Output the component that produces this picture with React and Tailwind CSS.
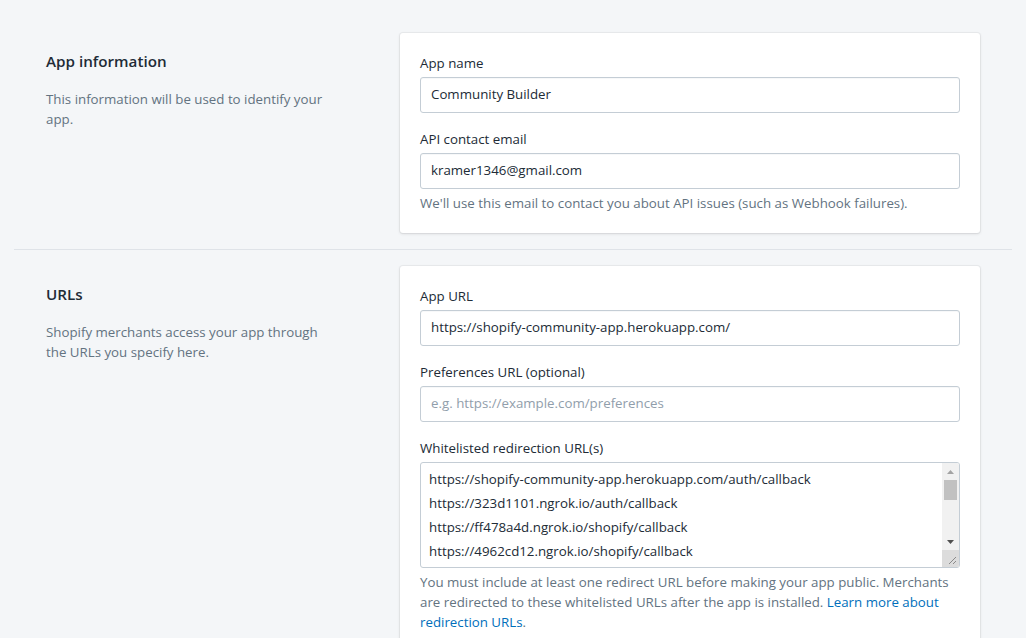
import React from "react";

const font = { fontFamily: '"Open Sans", "Noto Sans", Arial, sans-serif' };

function Label({ children }) {
  return <div className="text-[13.3px] leading-5 text-[#212b36] mb-1">{children}</div>;
}

function Input({ value, placeholder }) {
  return (
    <div className="h-9 w-full rounded-[3px] border border-[#c4cdd5] bg-white px-[10px] flex items-center shadow-[inset_0_1px_0_0_rgba(99,115,129,0.05)]">
      {value ? (
        <span className="text-[13.3px] text-[#212b36]">{value}</span>
      ) : (
        <span className="text-[13.3px] text-[#919eab]">{placeholder}</span>
      )}
    </div>
  );
}

function Section({ title, desc, children }) {
  return (
    <div className="flex px-8 pt-4 pb-4">
      <div className="w-[354px] shrink-0 pt-4">
        <h2 className="text-[15.2px] leading-6 font-semibold text-[#212b36]">{title}</h2>
        <p className="mt-4 w-[288px] text-[13.3px] leading-5 text-[#637381]">{desc}</p>
      </div>
      <div className="flex-1 rounded-[3px] bg-white p-5 shadow-[0_0_0_1px_rgba(63,63,68,0.05),0_1px_3px_0_rgba(63,63,68,0.15)]">
        {children}
      </div>
    </div>
  );
}

function Textarea() {
  const lines = [
    "https://shopify-community-app.herokuapp.com/auth/callback",
    "https://323d1101.ngrok.io/auth/callback",
    "https://ff478a4d.ngrok.io/shopify/callback",
    "https://4962cd12.ngrok.io/shopify/callback",
  ];
  return (
    <div className="relative h-[106px] w-full overflow-hidden rounded-[3px] border border-[#c4cdd5] bg-white">
      <div className="pl-2 pt-[4px] pr-5">
        {lines.map((l) => (
          <div key={l} className="text-[13.3px] leading-6 text-[#212b36] whitespace-nowrap">{l}</div>
        ))}
      </div>
      <div className="absolute right-0 top-0 bottom-0 w-[17px] bg-[#f1f1f1] flex flex-col">
        <div className="h-[17px] flex items-center justify-center">
          <svg width="7" height="4" viewBox="0 0 7 4"><path d="M3.5 0L7 4H0z" fill="#a3a3a3" /></svg>
        </div>
        <div className="mx-[2px] h-[20px] bg-[#c1c1c1]" />
        <div className="flex-1" />
        <div className="h-[17px] flex items-center justify-center">
          <svg width="7" height="4" viewBox="0 0 7 4"><path d="M0 0h7L3.5 4z" fill="#505050" /></svg>
        </div>
        <div className="h-[17px] bg-[#dcdcdc] relative">
          <svg className="absolute right-[2px] bottom-[2px]" width="9" height="9" viewBox="0 0 9 9">
            <path d="M8 1L1 8M8 5L5 8" stroke="#8a8a8a" strokeWidth="1" />
          </svg>
        </div>
      </div>
    </div>
  );
}

export default function App() {
  return (
    <div className="min-h-[638px] w-full bg-[#f4f6f8] overflow-hidden" style={font}>
      <div className="mx-[14px] w-[998px] pt-[17px]">
        <Section title="App information" desc="This information will be used to identify your app.">
          <Label>App name</Label>
          <Input value="Community Builder" />
          <div className="mt-4">
            <Label>API contact email</Label>
            <Input value="kramer1346@gmail.com" />
            <p className="mt-1 text-[13.3px] leading-5 text-[#637381]">
              We'll use this email to contact you about API issues (such as Webhook failures).
            </p>
          </div>
        </Section>
        <div className="h-px bg-[#dfe3e8]" />
        <Section title="URLs" desc="Shopify merchants access your app through the URLs you specify here.">
          <Label>App URL</Label>
          <Input value="https://shopify-community-app.herokuapp.com/" />
          <div className="mt-4">
            <Label>Preferences URL (optional)</Label>
            <Input placeholder="e.g. https://example.com/preferences" />
          </div>
          <div className="mt-4">
            <Label>Whitelisted redirection URL(s)</Label>
            <Textarea />
            <p className="mt-1 text-[13.3px] leading-5 text-[#637381]">
              You must include at least one redirect URL before making your app public. Merchants are redirected to these whitelisted URLs after the app is installed.{" "}
              <a className="text-[#006fbb]">Learn more about redirection URLs</a>.
            </p>
          </div>
        </Section>
      </div>
    </div>
  );
}
